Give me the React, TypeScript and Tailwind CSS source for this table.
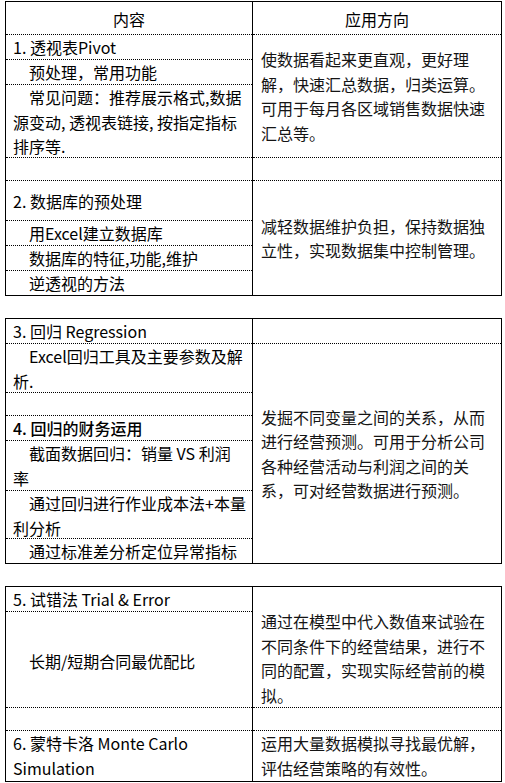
import React from "react";

type CellProps = {
  h: string;
  last?: boolean;
  align?: "top" | "center" | "bottom";
  className?: string;
  children?: React.ReactNode;
};

function Cell({ h, last, align = "top", className = "", children }: CellProps) {
  const al =
    align === "center" ? "justify-center" : align === "bottom" ? "justify-end" : "justify-start";
  return (
    <div
      className={`box-border flex flex-col ${al} ${h} ${
        last ? "" : "border-b border-dotted border-black"
      } ${className}`}
    >
      {children}
    </div>
  );
}

function L({ children, indent }: { children: React.ReactNode; indent?: boolean }) {
  return (
    <div className={`whitespace-nowrap leading-[24.5px] ${indent ? "pl-[23px]" : "pl-[7px]"}`}>
      {children}
    </div>
  );
}

function R({ children }: { children: React.ReactNode }) {
  return <div className="whitespace-nowrap leading-[24.5px] pl-[8px] text-[#141414]">{children}</div>;
}

function Table({
  left,
  right,
  className = "",
}: {
  left: React.ReactNode;
  right: React.ReactNode;
  className?: string;
}) {
  return (
    <div className={`ml-[5px] box-border flex w-[497px] border border-black ${className}`}>
      <div className="flex w-[246px] flex-col">{left}</div>
      <div className="flex flex-1 flex-col border-l border-black">{right}</div>
    </div>
  );
}

export default function App() {
  return (
    <div className="h-[783px] w-[505px] bg-white pt-[1px] font-['Noto_Sans_CJK_SC','Noto_Sans',sans-serif] text-[16px] text-black">
      <Table
        left={
          <>
            <Cell h="h-[33px]" align="center" className="items-center pt-[2px]">
              <div className="leading-[24.5px]">内容</div>
            </Cell>
            <Cell h="h-[25px]" align="center">
              <L>1. 透视表Pivot</L>
            </Cell>
            <Cell h="h-[25px]" align="center">
              <L indent>预处理，常用功能</L>
            </Cell>
            <Cell h="h-[73px]">
              <L indent>常见问题：推荐展示格式,数据</L>
              <L>源变动, 透视表链接, 按指定指标</L>
              <L>排序等.</L>
            </Cell>
            <Cell h="h-[23px]" />
            <Cell h="h-[40px]" align="center" className="pt-[2px]">
              <L>2. 数据库的预处理</L>
            </Cell>
            <Cell h="h-[25px]" align="center">
              <L indent>用Excel建立数据库</L>
            </Cell>
            <Cell h="h-[25px]" align="center">
              <L indent>数据库的特征,功能,维护</L>
            </Cell>
            <Cell h="h-[24px]" last align="center">
              <L indent>逆透视的方法</L>
            </Cell>
          </>
        }
        right={
          <>
            <Cell h="h-[33px]" align="center" className="items-center pt-[2px]">
              <div className="leading-[24.5px]">应用方向</div>
            </Cell>
            <Cell h="h-[123px]" align="center">
              <R>使数据看起来更直观，更好理</R>
              <R>解，快速汇总数据，归类运算。</R>
              <R>可用于每月各区域销售数据快速</R>
              <R>汇总等。</R>
            </Cell>
            <Cell h="h-[23px]" />
            <Cell h="h-[114px]" last align="center">
              <R>减轻数据维护负担，保持数据独</R>
              <R>立性，实现数据集中控制管理。</R>
            </Cell>
          </>
        }
      />

      <Table
        className="mt-[22px]"
        left={
          <>
            <Cell h="h-[25px]" align="center">
              <L>3. 回归 Regression</L>
            </Cell>
            <Cell h="h-[49px]">
              <L indent>Excel回归工具及主要参数及解</L>
              <L>析.</L>
            </Cell>
            <Cell h="h-[23px]" />
            <Cell h="h-[25px]" align="center">
              <L>
                <span className="font-medium">4. 回归的财务运用</span>
              </L>
            </Cell>
            <Cell h="h-[50px]">
              <L indent>截面数据回归：销量 VS 利润</L>
              <L>率</L>
            </Cell>
            <Cell h="h-[48px]">
              <L indent>通过回归进行作业成本法+本量</L>
              <L>利分析</L>
            </Cell>
            <Cell h="h-[24px]" last align="center">
              <L indent>通过标准差分析定位异常指标</L>
            </Cell>
          </>
        }
        right={
          <>
            <Cell h="h-[25px]" />
            <Cell h="h-[219px]" last align="center">
              <R>发掘不同变量之间的关系，从而</R>
              <R>进行经营预测。可用于分析公司</R>
              <R>各种经营活动与利润之间的关</R>
              <R>系，可对经营数据进行预测。</R>
            </Cell>
          </>
        }
      />

      <Table
        className="mt-[22px]"
        left={
          <>
            <Cell h="h-[25px]" align="center">
              <L>5. 试错法 Trial &amp; Error</L>
            </Cell>
            <Cell h="h-[96px]" align="center" className="pt-[4px]">
              <L indent>长期/短期合同最优配比</L>
            </Cell>
            <Cell h="h-[23px]" />
            <Cell h="h-[50px]" last>
              <L>6. 蒙特卡洛 Monte Carlo</L>
              <L>Simulation</L>
            </Cell>
          </>
        }
        right={
          <>
            <Cell h="h-[121px]" align="bottom">
              <R>通过在模型中代入数值来试验在</R>
              <R>不同条件下的经营结果，进行不</R>
              <R>同的配置，实现实际经营前的模</R>
              <R>拟。</R>
            </Cell>
            <Cell h="h-[23px]" />
            <Cell h="h-[50px]" last>
              <R>运用大量数据模拟寻找最优解，</R>
              <R>评估经营策略的有效性。</R>
            </Cell>
          </>
        }
      />
    </div>
  );
}
